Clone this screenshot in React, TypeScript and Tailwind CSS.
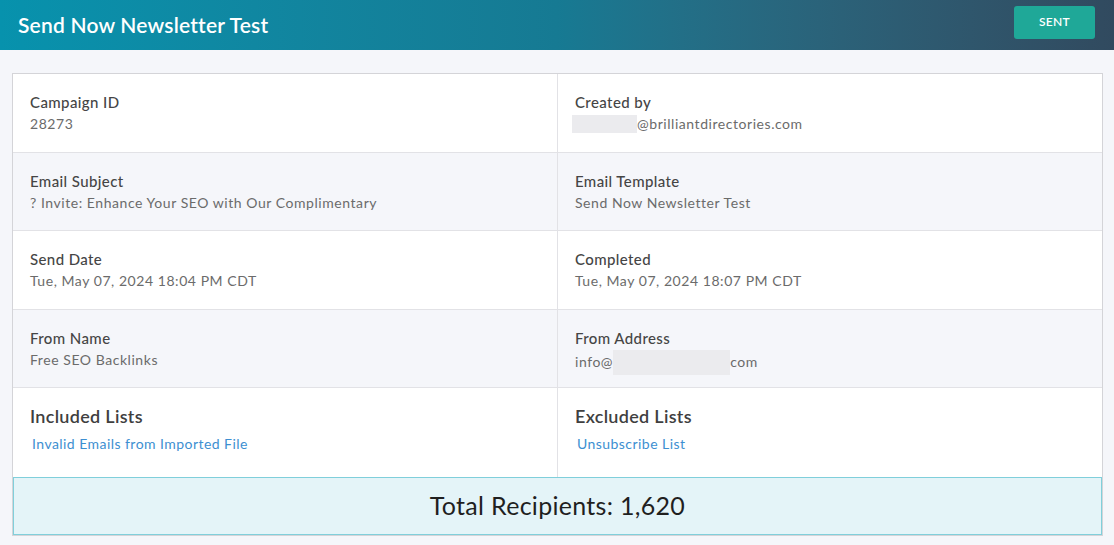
import React from "react";

// ============ Data ============

type Cell = {
  label: string;
  value?: React.ReactNode;
};

const Redacted = ({ w, h }: { w: number; h: number }) => (
  <span
    className="inline-block bg-[#ebebee] align-middle"
    style={{ width: w, height: h }}
  />
);

const ROWS: [Cell, Cell][] = [
  [
    { label: "Campaign ID", value: "28273" },
    {
      label: "Created by",
      value: (
        <span className="-ml-[3px] inline-flex items-center">
          <Redacted w={65} h={18} />
          @brilliantdirectories.com
        </span>
      ),
    },
  ],
  [
    { label: "Email Subject", value: "? Invite: Enhance Your SEO with Our Complimentary" },
    { label: "Email Template", value: "Send Now Newsletter Test" },
  ],
  [
    { label: "Send Date", value: "Tue, May 07, 2024 18:04 PM CDT" },
    { label: "Completed", value: "Tue, May 07, 2024 18:07 PM CDT" },
  ],
  [
    { label: "From Name", value: "Free SEO Backlinks" },
    {
      label: "From Address",
      value: (
        <span className="inline-flex items-center">
          info@
          <Redacted w={117} h={25} />
          com
        </span>
      ),
    },
  ],
];

// ============ Component ============

const InfoCell = ({ cell, right }: { cell: Cell; right?: boolean }) => (
  <div className={`flex-1 h-full px-[17px] pt-[18px] ${right ? "" : "border-r border-[#e2e2e6]"}`}>
    <div className="text-[15px] leading-[20px] font-medium text-[#454545] tracking-[0.4px]">{cell.label}</div>
    <div className="mt-[2px] text-[14px] leading-[20px] text-[#6b6b6b] tracking-[0.55px]">{cell.value}</div>
  </div>
);

const ListCell = ({ title, link, right }: { title: string; link: string; right?: boolean }) => (
  <div className={`flex-1 h-full px-[17px] pt-[16px] ${right ? "" : "border-r border-[#e2e2e6]"}`}>
    <div className="text-[18px] leading-[24px] font-semibold text-[#3f3f3f] tracking-[0.3px]">{title}</div>
    <a href="#" className="block mt-[6px] ml-[2px] text-[14px] leading-[20px] text-[#3d8fd1] tracking-[0.45px]">
      {link}
    </a>
  </div>
);

export default function App() {
  return (
    <div
      className="min-h-[545px] bg-[#f5f6fa]"
      style={{ fontFamily: "Lato, 'Noto Sans', sans-serif" }}
    >
      <header className="h-[50px] flex items-center justify-between pl-[18px] pr-[19px] bg-gradient-to-r from-[#0792ad] via-[#167a93] to-[#314a5f]">
        <h1 className="text-[21px] font-semibold text-white tracking-[0.2px]">Send Now Newsletter Test</h1>
        <button
          type="button"
          className="h-[33px] w-[81px] -mt-[6px] rounded-[3px] bg-[#1fa898] text-[12px] font-semibold text-white tracking-[0.3px]"
        >
          SENT
        </button>
      </header>

      <div className="pt-[23px] px-[12px] pr-[11px]">
        <div className="border border-[#d4d4d8] bg-white">
          {ROWS.map((row, i) => (
            <div
              key={i}
              className={`flex h-[78.5px] border-b border-[#e2e2e6] ${i % 2 === 1 ? "bg-[#f5f6fa]" : "bg-white"}`}
            >
              <div className="w-[545px] h-full flex">
                <InfoCell cell={row[0]} />
              </div>
              <div className="flex-1 h-full flex">
                <InfoCell cell={row[1]} right />
              </div>
            </div>
          ))}

          <div className="flex h-[89px]">
            <div className="w-[545px] h-full flex">
              <ListCell title="Included Lists" link="Invalid Emails from Imported File" />
            </div>
            <div className="flex-1 h-full flex">
              <ListCell title="Excluded Lists" link="Unsubscribe List" right />
            </div>
          </div>

          <div className="h-[58px] flex items-center justify-center border border-[#80cfdb] bg-[#e4f4f8]">
            <span className="text-[25px] text-[#1f1f1f] tracking-[0.3px]">Total Recipients: 1,620</span>
          </div>
        </div>
      </div>
    </div>
  );
}
